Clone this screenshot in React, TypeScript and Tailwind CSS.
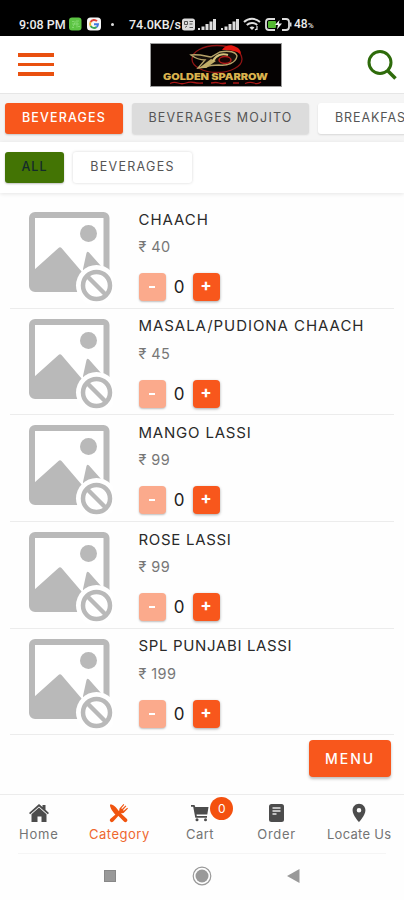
import React, { useState } from "react";
import { MdLocationOn } from "react-icons/md";
import clsx from "clsx";

type MenuItem = {
  name: string;
  price: number;
  tracking: string;
};

const items: MenuItem[] = [
  { name: "CHAACH", price: 40, tracking: "tracking-[0.95px]" },
  { name: "MASALA/PUDIONA CHAACH", price: 45, tracking: "tracking-[0.95px]" },
  { name: "MANGO LASSI", price: 99, tracking: "tracking-[0.8px]" },
  { name: "ROSE LASSI", price: 99, tracking: "tracking-[0.7px]" },
  { name: "SPL PUNJABI LASSI", price: 199, tracking: "tracking-[0.65px]" },
];

function SignalIcon() {
  return (
    <svg width="18" height="12" viewBox="0 0 18 12" fill="#dedede">
      <rect x="0" y="10" width="2" height="2" />
      <rect x="3.500" y="8.500" width="3" height="3.500" />
      <rect x="7.500" y="6" width="3" height="6" />
      <rect x="11.500" y="3.500" width="3" height="8.500" />
      <rect x="15" y="1" width="3" height="11" />
    </svg>
  );
}

function StatusBar() {
  return (
    <div className="flex h-9 items-end bg-black pb-1 pl-[19px] font-[Roboto,sans-serif] text-[12px] leading-[15px] font-medium text-[#ececec]">
      <span className="w-[50px] text-[12.500px] whitespace-nowrap">9:08 PM</span>
      <svg className="mb-px" width="13" height="14" viewBox="0 0 13 14">
        <rect y="0.500" width="12.500" height="13" rx="3" fill="#5cc443" />
        <path
          d="M3 4.500h2.500M7 4h3M3 7h7M4 9.500l2.500-5M8 4.500v6M3 10.500h2M9 9.500h2"
          stroke="#8bdc78"
          strokeWidth="0.800"
          fill="none"
        />
      </svg>
      <svg className="mb-px ml-[5px]" width="14" height="14" viewBox="0 0 14 14">
        <rect y="0.500" width="14" height="13" rx="3.500" fill="#f7f7f7" />
        <g fill="none" strokeWidth="1.900">
          <path d="M10 4.200A4 4 0 0 0 3.600 5" stroke="#e0443a" />
          <path d="M3.600 5a4 4 0 0 0 0 4" stroke="#f0b52c" />
          <path d="M3.600 9a4 4 0 0 0 6 1" stroke="#3aa757" />
          <path d="M9.600 10A4 4 0 0 0 11 7.200H7" stroke="#4078e0" />
        </g>
      </svg>
      <span className="mb-[6px] ml-[10px] size-[3px] rounded-full bg-[#dddddd]" />
      <span className="ml-[15px] w-[53px] text-[12.500px] whitespace-nowrap">74.0KB/s</span>
      <svg className="mb-px" width="14" height="13" viewBox="0 0 14 13">
        <rect y="0.500" width="13" height="12" rx="2.500" fill="#dcdcdc" />
        <path
          d="M2.500 3.500h3v3h-3zM7.500 3.500h3.500M7.500 6h3M3 9.500l2-1.500M7.500 9.500h3.500"
          stroke="#555"
          strokeWidth="1"
          fill="none"
        />
      </svg>
      <div className="mb-[2px] ml-[2px] flex gap-[5px]">
        <SignalIcon />
        <SignalIcon />
      </div>
      <svg
        className="mb-px ml-[4px]"
        width="18"
        height="14"
        viewBox="0 0 18 14"
        fill="none"
        stroke="#e0e0e0"
        strokeWidth="2"
      >
        <path d="M1 5a11.500 11.500 0 0 1 16 0M3.800 8a7.500 7.500 0 0 1 10.400 0" />
        <path d="M6.500 10.600a3.800 3.800 0 0 1 5 0L9 13z" fill="#e0e0e0" stroke="none" />
        <path d="M14 9v4M12 13l1.500-1" strokeWidth="1.200" />
      </svg>
      <svg className="mb-px ml-[4px]" width="27" height="13" viewBox="0 0 27 13">
        <path
          d="M10 1H4a3 3 0 0 0-3 3v5a3 3 0 0 0 3 3h6M17 1h4a3 3 0 0 1 3 3v5a3 3 0 0 1-3 3h-4"
          stroke="#dcdcdc"
          strokeWidth="1.800"
          fill="none"
        />
        <rect x="3" y="3" width="8" height="7" rx="1" fill="#55b833" />
        <path d="M14.500 2l-4.500 5h3l-1 4.500 5-6h-3.200z" fill="#f5f5f5" />
        <rect x="25" y="4.500" width="1.500" height="4" fill="#dcdcdc" />
      </svg>
      <span className="ml-[2px]">48</span>
      <span className="text-[8px] leading-[13px]">%</span>
    </div>
  );
}

function Logo() {
  return (
    <svg width="132" height="44" viewBox="0 0 132 44">
      <rect x="0.500" y="0.500" width="131" height="43" fill="#050202" stroke="#9c9c9c" />
      <ellipse cx="67" cy="16" rx="25" ry="13.500" fill="none" stroke="#8d1414" strokeWidth="1.300" />
      <path
        d="M41 12c8-1 14 1 20 2l9-5c9-2 16 0 17 4-1 7-10 10-18 9-6 0-9 0-13 2l-8 1 7-8c-6 0-10-2-14-5z"
        fill="#17110b"
        stroke="#b5a268"
        strokeWidth="1.400"
      />
      <path d="M49 25l12-9 5 2-10 7z" fill="#c1ad68" />
      <path d="M63 18c3-6 9-8 15-6" fill="none" stroke="#d3c17a" strokeWidth="2" />
      <ellipse cx="75" cy="17" rx="6" ry="3.500" fill="#1a0505" stroke="#b31919" strokeWidth="1.500" />
      <path d="M72 7c3-5 9-6 14-3 3 1 5 4 5 7-5-3-10-4-19-4z" fill="#e3170f" />
      <text
        x="13"
        y="36.500"
        textLength="105"
        lengthAdjust="spacingAndGlyphs"
        fontFamily="Inter, sans-serif"
        fontWeight="900"
        fontSize="9"
        fill="#d9b24e"
      >
        GOLDEN SPARROW
      </text>
      <path
        d="M20 40.500q4-2 8-.5t8 0 8-.5 9 .5M61 40q5-1 8 0t7 0M83 40h6M95 40.500q5-2 9-.5t7-1"
        fill="none"
        stroke="#a81616"
        strokeWidth="1.300"
      />
    </svg>
  );
}

function Header() {
  return (
    <header className="flex h-[58px] items-center border-b border-[#e6e6e6] bg-white pr-[6px] pl-[18px]">
      <button className="flex w-9 flex-col gap-[6px]" aria-label="Open menu">
        <span className="h-[3.500px] w-9 bg-[#e9500f]" />
        <span className="h-[3.500px] w-9 bg-[#e9500f]" />
        <span className="h-[3.500px] w-9 bg-[#e9500f]" />
      </button>
      <div className="ml-[96px]">
        <Logo />
      </div>
      <button className="ml-auto" aria-label="Search">
        <svg
          width="32"
          height="32"
          viewBox="0 0 32 32"
          fill="none"
          stroke="#2e6b0b"
          strokeWidth="3"
        >
          <circle cx="14" cy="13.500" r="11" />
          <path d="M21.500 21.500l8 8" strokeWidth="3.500" />
        </svg>
      </button>
    </header>
  );
}

function NoImage() {
  return (
    <svg width="84" height="92" viewBox="0 0 84 92">
      <rect x="3" y="3" width="74.500" height="74" rx="3" fill="#fff" stroke="#b9b9b9" strokeWidth="6" />
      <circle cx="59.500" cy="21.500" r="8.500" fill="#b9b9b9" />
      <path
        d="M5 58L29.500 36q1.500-1.500 3 0L53 60v19H5zM54 57l3.500-16q1-2 2.500-.5L72 54v8H54z"
        fill="#b9b9b9"
      />
      <circle cx="67.500" cy="73.500" r="20.500" fill="#fff" />
      <circle cx="67.500" cy="73.500" r="13.500" fill="none" stroke="#b9b9b9" strokeWidth="4.500" />
      <path d="M58 64l19 19" stroke="#b9b9b9" strokeWidth="4.500" />
    </svg>
  );
}

function ItemRow({ item }: { item: MenuItem }) {
  const [qty, setQty] = useState(0);

  return (
    <div className="mx-[10px] flex h-[106.700px] border-b border-[#ececec]">
      <div className="w-[128.500px] pt-[10px] pl-[18.500px]">
        <NoImage />
      </div>
      <div className="flex-1 pt-[7.500px]">
        <h3 className={clsx("text-[15px] leading-5 whitespace-nowrap text-[#2a2a2a]", item.tracking)}>
          {item.name}
        </h3>
        <p className="mt-[7.500px] text-[14.500px] leading-5 tracking-[0.4px] text-[#777]">
          ₹ {item.price}
        </p>
        <div className="mt-4 flex items-center">
          <button
            className="flex h-7 w-[27px] items-center justify-center rounded-[4px] bg-[#fbaa8c] shadow-[0_1px_2px_rgba(0,0,0,0.25)]"
            onClick={() => setQty(Math.max(0, qty - 1))}
          >
            <span className="h-[2px] w-[6px] bg-white" />
          </button>
          <span className="w-[27px] text-center text-[17px] leading-7 text-[#222]">{qty}</span>
          <button
            className="flex h-7 w-[27px] items-center justify-center rounded-[4px] bg-[#f8571c] pb-[3px] text-[17px] leading-none font-bold text-white shadow-[0_1px_3px_rgba(0,0,0,0.35)]"
            onClick={() => setQty(qty + 1)}
          >
            +
          </button>
        </div>
      </div>
    </div>
  );
}

function HomeIcon() {
  return (
    <svg width="20" height="18" viewBox="0 0 20 18" fill="#4c4c4c">
      <path d="M10 0l3.500 3V1h3v4.800L20 9l-1.200 1.300L10 2.500 1.200 10.300 0 9z" />
      <path d="M10 3.500l7.500 6.700V18h-5v-5.500h-4V18h-6v-7.800z" />
    </svg>
  );
}

function CutleryIcon() {
  return (
    <svg width="20" height="20" viewBox="0 0 20 20" fill="#f0540f">
      <path d="M1 1.500C4 1 7 4 9 7l2 2.500 7 6.500a2 2 0 0 1-2.800 2.800L9 12.500 7.500 13C5 10 .5 5 1 1.500z" />
      <path d="M1.200 16L10 8.500l.500-3L14.500 1l.800.800-3 3.500.7.700 3.500-3.500.8.800L14 7l.700.700 3.500-3 .8.800-4.500 4.500-3 .5L4 18.800A2 2 0 0 1 1.200 16z" />
    </svg>
  );
}

function CartIcon() {
  return (
    <svg width="18" height="18" viewBox="0 0 18 18" fill="#4c4c4c">
      <path d="M0 1h3.500l.8 2H17.500l-1.200 7.500H5.500l.3 1.500H16v1.800H4.300L2.200 2.800H0z" />
      <circle cx="6" cy="15.800" r="1.500" />
      <circle cx="14.500" cy="15.800" r="1.500" />
    </svg>
  );
}

function OrderIcon() {
  return (
    <svg width="15" height="18" viewBox="0 0 15 18">
      <rect width="15" height="18" rx="2.500" fill="#4c4c4c" />
      <path d="M3.500 4h8M3.500 7h8M3.500 10h4" stroke="#e8e8e8" strokeWidth="1.500" />
    </svg>
  );
}

function BottomTabs() {
  return (
    <nav className="flex h-[59px] border-t border-[#ececec] text-[13px] leading-4 text-[#747474]">
      <div className="flex w-[78px] flex-col items-center pt-[9px]">
        <HomeIcon />
        <span className="mt-1 tracking-[0.8px]">Home</span>
      </div>
      <div className="flex w-[84px] flex-col items-center pt-[8px] text-[#ee672f]">
        <CutleryIcon />
        <span className="mt-[3px] tracking-[0.5px]">Category</span>
      </div>
      <div className="relative flex w-[78px] flex-col items-center pt-[9px]">
        <CartIcon />
        <span className="mt-1 tracking-[0.5px]">Cart</span>
        <span className="absolute top-[2px] left-[49px] flex size-[23px] items-center justify-center rounded-full bg-[#f4510f] text-[12px] text-white">
          0
        </span>
      </div>
      <div className="flex w-[76px] flex-col items-center pt-[9px]">
        <OrderIcon />
        <span className="mt-1 tracking-[0.7px]">Order</span>
      </div>
      <div className="flex w-[90px] flex-col items-center pt-[7px]">
        <MdLocationOn size={22} color="#4c4c4c" />
        <span className="mt-[2px] tracking-[0.3px] whitespace-nowrap">Locate Us</span>
      </div>
    </nav>
  );
}

function SystemNav() {
  return (
    <div className="mx-[18px] flex h-[45px] items-center border-t border-[#f5f5f5] pl-[86px]">
      <span className="size-3 border border-[#888] bg-[#999]" />
      <svg className="ml-[76px]" width="20" height="20" viewBox="0 0 20 20">
        <circle cx="10" cy="10" r="8.800" fill="none" stroke="#999" strokeWidth="1.200" />
        <circle cx="10" cy="10" r="6.500" fill="#999" />
      </svg>
      <svg className="ml-[75px]" width="13" height="14" viewBox="0 0 13 14">
        <path d="M12.500 0v14L0 7z" fill="#999" />
      </svg>
    </div>
  );
}

export default function App() {
  return (
    <div className="flex h-[900px] w-[404px] flex-col overflow-hidden bg-[#fefefe] font-[Inter,sans-serif]">
      <StatusBar />
      <Header />

      {/* Categories */}
      <div className="flex h-12 items-start gap-[9px] overflow-hidden bg-[#f5f5f5] pt-[9px] pl-[5px] text-[12.500px] whitespace-nowrap text-[#555]">
        <button className="h-[31px] w-[118px] shrink-0 rounded-[3px] bg-[#f8571c] font-medium tracking-[1.150px] text-white shadow-[0_1px_2px_rgba(0,0,0,0.2)]">
          BEVERAGES
        </button>
        <button className="h-[31px] w-[177px] shrink-0 rounded-[3px] bg-[#dcdcdc] tracking-[1.200px] shadow-[0_1px_2px_rgba(0,0,0,0.12)]">
          BEVERAGES MOJITO
        </button>
        <button className="h-[31px] w-[120px] shrink-0 rounded-[3px] bg-white pl-[17px] text-left tracking-[0.9px] shadow-[0_1px_2px_rgba(0,0,0,0.12)]">
          BREAKFAST
        </button>
      </div>

      {/* Sub categories */}
      <div className="flex h-[51px] gap-[9px] bg-white pt-[10px] pl-[5px] text-[12.500px] text-[#555] shadow-[0_1px_4px_rgba(0,0,0,0.1)]">
        <button className="h-[31px] w-[59px] rounded-[3px] bg-[#437404] font-medium tracking-[1px] text-[#142b2b] shadow-[0_1px_2px_rgba(0,0,0,0.25)]">
          ALL
        </button>
        <button className="h-[31px] w-[119px] rounded-[3px] bg-white tracking-[1.300px] shadow-[0_0_3px_rgba(0,0,0,0.17)]">
          BEVERAGES
        </button>
      </div>

      <main className="flex h-[601px] flex-col pt-[9px]">
        {items.map((item) => (
          <ItemRow key={item.name} item={item} />
        ))}
        <button className="mt-[5px] mr-[13px] h-[37px] w-[82px] self-end rounded-[4px] bg-[#f8571c] text-[14px] font-medium tracking-[2px] text-white shadow-[0_2px_3px_rgba(0,0,0,0.25)]">
          MENU
        </button>
      </main>

      <BottomTabs />
      <SystemNav />
    </div>
  );
}
